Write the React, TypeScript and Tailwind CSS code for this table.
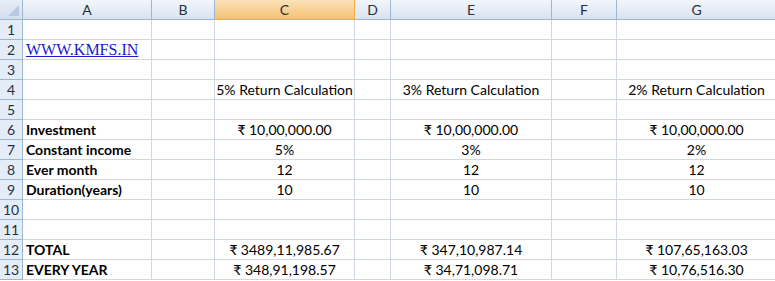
import React from "react";

const cols = [
  { key: "A", w: 129 },
  { key: "B", w: 63 },
  { key: "C", w: 140 },
  { key: "D", w: 36 },
  { key: "E", w: 161 },
  { key: "F", w: 65 },
  { key: "G", w: 160 },
];

type Cell = { text?: string; bold?: boolean; link?: boolean; align?: "left" | "center" };

const rows: Record<number, Record<string, Cell>> = {
  2: { A: { text: "WWW.KMFS.IN", link: true } },
  4: {
    C: { text: "5% Return Calculation", align: "center" },
    E: { text: "3% Return Calculation", align: "center" },
    G: { text: "2% Return Calculation", align: "center" },
  },
  6: {
    A: { text: "Investment", bold: true },
    C: { text: "₹ 10,00,000.00", align: "center" },
    E: { text: "₹ 10,00,000.00", align: "center" },
    G: { text: "₹ 10,00,000.00", align: "center" },
  },
  7: {
    A: { text: "Constant income", bold: true },
    C: { text: "5%", align: "center" },
    E: { text: "3%", align: "center" },
    G: { text: "2%", align: "center" },
  },
  8: {
    A: { text: "Ever month", bold: true },
    C: { text: "12", align: "center" },
    E: { text: "12", align: "center" },
    G: { text: "12", align: "center" },
  },
  9: {
    A: { text: "Duration(years)", bold: true },
    C: { text: "10", align: "center" },
    E: { text: "10", align: "center" },
    G: { text: "10", align: "center" },
  },
  12: {
    A: { text: "TOTAL", bold: true },
    C: { text: "₹ 3489,11,985.67", align: "center" },
    E: { text: "₹ 347,10,987.14", align: "center" },
    G: { text: "₹ 107,65,163.03", align: "center" },
  },
  13: {
    A: { text: "EVERY YEAR", bold: true },
    C: { text: "₹ 348,91,198.57", align: "center" },
    E: { text: "₹ 34,71,098.71", align: "center" },
    G: { text: "₹ 10,76,516.30", align: "center" },
  },
};

const font = { fontFamily: "Lato, 'Noto Sans', 'DejaVu Sans', sans-serif" };

export default function App() {
  return (
    <div className="w-[775px] h-[281px] overflow-hidden bg-white text-[14px] text-black" style={font}>
      <div className="flex h-[20px]">
        <div className="w-[23px] shrink-0 border-r border-b border-[#9eb6ce] bg-gradient-to-b from-[#e8eef7] to-[#d4dfee] relative">
          <div className="absolute right-[3px] bottom-[3px] w-0 h-0 border-l-[11px] border-l-transparent border-b-[11px] border-b-[#b8c9dd]" />
        </div>
        {cols.map((c) =>
          c.key === "C" ? (
            <div
              key={c.key}
              className="shrink-0 h-[20px] flex items-center justify-center border-r border-b border-[#f2a94b] bg-gradient-to-b from-[#fbe3b9] to-[#f5c170] text-[#27313d]"
              style={{ width: c.w }}
            >
              {c.key}
            </div>
          ) : (
            <div
              key={c.key}
              className="shrink-0 h-[20px] flex items-center justify-center border-r border-b border-[#9eb6ce] bg-gradient-to-b from-[#f2f6fb] to-[#d9e3f0] text-[#27313d]"
              style={{ width: c.w }}
            >
              {c.key}
            </div>
          )
        )}
      </div>
      {Array.from({ length: 13 }, (_, i) => i + 1).map((r) => (
        <div key={r} className="flex h-[20px]">
          <div className="w-[23px] shrink-0 flex items-center justify-center border-r border-b border-[#9eb6ce] bg-[#e4ecf7] text-[#27313d]">
            {r}
          </div>
          {cols.map((c) => {
            const cell = rows[r]?.[c.key];
            return (
              <div
                key={c.key}
                className={
                  "shrink-0 h-[20px] flex items-center border-r border-b border-[#d0d7e5] whitespace-nowrap overflow-visible " +
                  (cell?.align === "center" ? "justify-center" : "justify-start pl-[3px]")
                }
                style={{ width: c.w }}
              >
                {cell?.link ? (
                  <span
                    className="text-[#1a1acc] underline text-[16px]"
                    style={{ fontFamily: "'Liberation Serif', serif" }}
                  >
                    {cell.text}
                  </span>
                ) : cell ? (
                  <span className={cell.bold ? "font-bold" : ""}>{cell.text}</span>
                ) : null}
              </div>
            );
          })}
        </div>
      ))}
    </div>
  );
}
